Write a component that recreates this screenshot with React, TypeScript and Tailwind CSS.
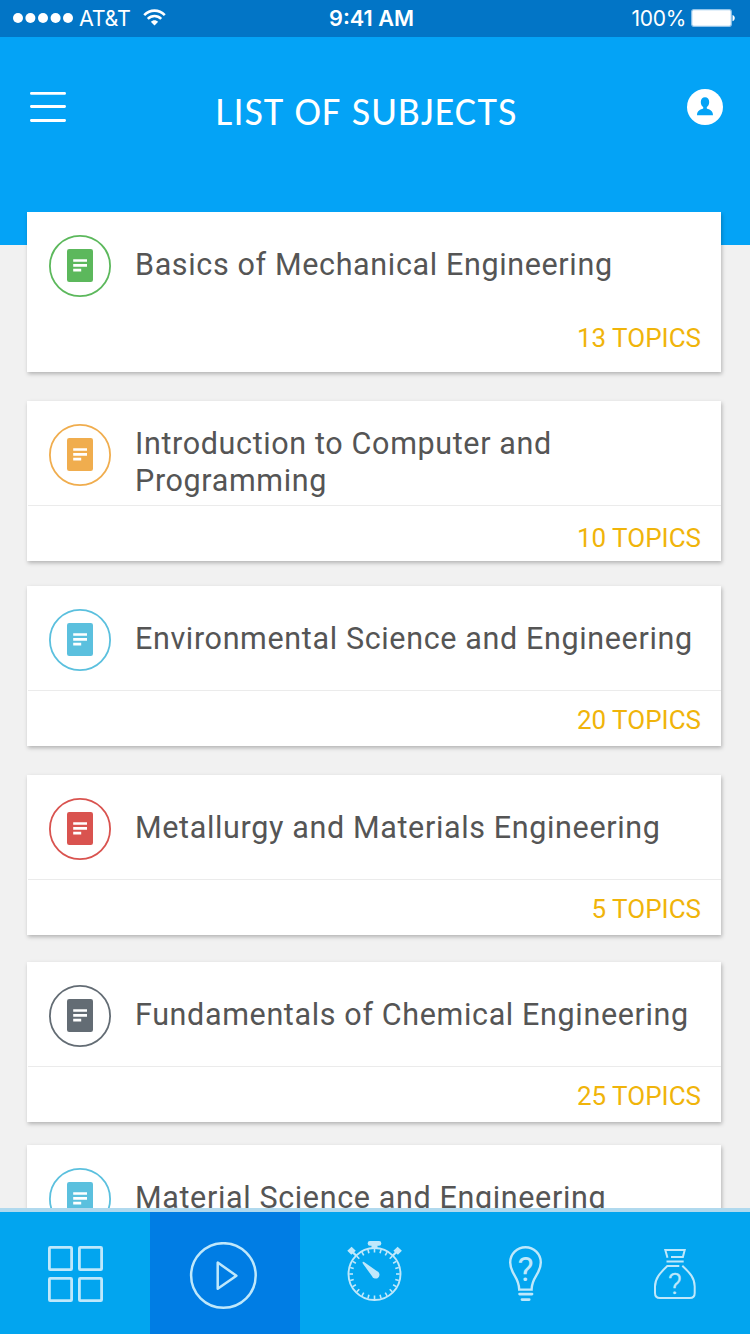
import React from "react";

type Subject = {
  title: string[];
  topics?: string;
  color: string;
  gap: string;
  divider: boolean;
  footer: string;
};

const subjects: Subject[] = [
  { title: ["Basics of Mechanical Engineering"], topics: "13 TOPICS", color: "text-[#5cb85c]", gap: "mt-0", divider: false, footer: "pt-[5px]" },
  { title: ["Introduction to Computer and", "Programming"], topics: "10 TOPICS", color: "text-[#f0ad4e]", gap: "mt-[29px]", divider: true, footer: "pt-[16px]" },
  { title: ["Environmental Science and Engineering"], topics: "20 TOPICS", color: "text-[#5bc0de]", gap: "mt-[25px]", divider: true, footer: "pt-[13px]" },
  { title: ["Metallurgy and Materials Engineering"], topics: "5 TOPICS", color: "text-[#d9534f]", gap: "mt-[29px]", divider: true, footer: "pt-[13px]" },
  { title: ["Fundamentals of Chemical Engineering"], topics: "25 TOPICS", color: "text-[#636c74]", gap: "mt-[27px]", divider: true, footer: "pt-[13px]" },
  { title: ["Material Science and Engineering"], color: "text-[#5bc0de]", gap: "mt-[23px]", divider: true, footer: "pt-[13px]" },
];

function DocumentBadge({ color }: { color: string }) {
  return (
    <svg width="62" height="62" viewBox="0 0 62 62" className={`shrink-0 ${color}`} fill="none">
      <circle cx="31" cy="31" r="30.1" stroke="currentColor" strokeWidth="1.8" />
      <rect x="18" y="14" width="26" height="33" rx="2.2" fill="currentColor" />
      <path d="M24.200 25.500h13.800M24.200 30.400h13.800M24.200 35.200h8" stroke="#fff" strokeWidth="2.700" />
    </svg>
  );
}

function SubjectCard({ subject }: { subject: Subject }) {
  return (
    <article className={`flex h-[160px] w-[694px] shrink-0 flex-col bg-white shadow-[1px_2px_4px_rgba(0,0,0,0.26)] ${subject.gap}`}>
      <div className="flex h-[104px] gap-6 pl-[22px] pt-[23px]">
        <DocumentBadge color={subject.color} />
        <h2 className={`whitespace-nowrap text-[30.5px] leading-[37px] tracking-[0.64px] text-[#555] ${subject.title.length > 1 ? "pt-px" : "pt-[11px]"}`}>
          {subject.title.map((line) => (
            <span key={line} className="block">{line}</span>
          ))}
        </h2>
      </div>
      <div className={`ml-px flex-1 border-t pr-5 text-right text-[26px] leading-8 text-[#f0b40a] ${subject.divider ? "border-[#ebebeb]" : "border-transparent"} ${subject.footer}`}>
        {subject.topics}
      </div>
    </article>
  );
}

function StatusBar() {
  return (
    <div className="flex h-[37px] items-center bg-[#0275c6] font-['Inter',sans-serif] text-[22px] text-white">
      <div className="flex flex-1 items-center pl-[13px]">
        <svg className="-mt-px" width="60" height="10" viewBox="0 0 60 10" fill="#fff">
          <circle cx="5" cy="5" r="5" />
          <circle cx="17.4" cy="5" r="5" />
          <circle cx="30" cy="5" r="5" />
          <circle cx="42.6" cy="5" r="5" />
          <circle cx="55" cy="5" r="5" />
        </svg>
        <span className="ml-[6px] w-[52px] whitespace-nowrap text-[21.5px] tracking-[-0.3px]">AT&amp;T</span>
        <svg className="-mt-[2px] ml-3" width="23" height="17" viewBox="0 0 23 17" fill="none">
          <path d="M1.2 6.1C7.2.1 15.8.1 21.8 6.1" stroke="#fff" strokeWidth="2.6" />
          <path d="M4.8 9.8c3.8-3.9 9.6-3.9 13.4 0" stroke="#fff" strokeWidth="2.5" />
          <path d="M7.8 12.7c2.2-2.1 5.2-2.1 7.4 0L11.5 16.6z" fill="#fff" />
        </svg>
      </div>
      <span className="w-[90px] whitespace-nowrap pr-[5px] text-center text-[21.700px] font-semibold">9:41 AM</span>
      <div className="flex flex-1 items-center justify-end pr-[15px]">
        <span className="whitespace-nowrap pt-px text-[21px] tracking-[-0.3px]">100%</span>
        <svg className="-mt-px ml-[5px]" width="44" height="18" viewBox="0 0 44 18">
          <rect x="0.7" y="0.7" width="39.6" height="16.6" rx="2" fill="#fff" stroke="#8fc3ea" strokeWidth="1.2" />
          <path d="M41.5 6c3 .8 3 5.400 0 6.200z" fill="#fff" />
        </svg>
      </div>
    </div>
  );
}

function GridIcon() {
  return (
    <svg width="55" height="56" viewBox="0 0 55 56" fill="none" stroke="#bfe8fb" strokeWidth="2.8">
      <rect x="1.400" y="1.400" width="22.200" height="22.200" rx="0.8" />
      <rect x="31.400" y="1.400" width="22.200" height="22.200" rx="0.8" />
      <rect x="1.400" y="32.400" width="22.200" height="22.200" rx="0.8" />
      <rect x="31.400" y="32.400" width="22.200" height="22.200" rx="0.8" />
    </svg>
  );
}

function PlayIcon() {
  return (
    <svg width="68" height="68" viewBox="0 0 68 68" fill="none" stroke="#bfe8fb" strokeWidth="2.500">
      <circle cx="34.400" cy="33.500" r="32.300" />
      <path d="M28.700 20.600v26.200l18.700-13.100z" strokeLinejoin="round" />
    </svg>
  );
}

const ticks = Array.from({ length: 24 }, (_, i) => i * 15);

function StopwatchIcon() {
  return (
    <svg width="60" height="62" viewBox="0 0 60 62" fill="none" stroke="#bfe8fb">
      <circle cx="29.500" cy="34" r="26" strokeWidth="1.9" />
      {ticks.map((angle) => (
        <path key={angle} d="M29.500 8.800v3.700" strokeWidth="1.600" transform={`rotate(${angle} 29.5 34)`} />
      ))}
      <rect x="22.700" y="1" width="13.600" height="4.700" rx="2.200" fill="#bfe8fb" stroke="none" />
      <path d="M29.500 5v4" strokeWidth="6" />
      <path d="M7 11.400l4.500 4.600M51.900 11.400l-4.500 4.600" strokeWidth="2.200" />
      <path d="M6.600 6.700l4.200 4-4.500 4-4-4zM52.600 6.700l-4.200 4 4.500 4 4-4z" fill="#bfe8fb" stroke="none" />
      <path d="M17.500 22Q18 21.500 19 22L31.800 31a3.900 3.900 0 1 1-4.900 5L17.800 23.500z" fill="#bfe8fb" stroke="none" />
    </svg>
  );
}

function BulbIcon() {
  return (
    <svg className="overflow-visible" width="41" height="64" viewBox="0 0 41 64" fill="none" stroke="#bfe8fb" strokeWidth="2.400">
      <path d="M14.200 49.600C14.200 37 5.200 34 5.200 22.500a15.300 15.300 0 0 1 30.600 0C35.800 34 26.600 37 26.600 49.600z" />
      <path d="M14.600 54.100h12.400M17 59.600h7.200" strokeWidth="2.800" strokeLinecap="round" />
      <text x="20.500" y="40.600" textAnchor="middle" fontSize="34" fill="#bfe8fb" stroke="none">?</text>
    </svg>
  );
}

function BagIcon() {
  return (
    <svg className="overflow-visible" width="50" height="58" viewBox="0 0 50 58" fill="none" stroke="#bfe8fb" strokeWidth="2">
      <path d="M17.500 12.800L15.300 5h19.400l-1.800 7H21M16.500 16.400h17.200M29.300 21H17.300C10 28 5 33.500 5 41.500V48q0 5 5 5h29.800q4.900 0 4.900-5v-6.500C44.700 33 40 28 32.300 20.700" />
      <text x="24.800" y="49.200" textAnchor="middle" fontSize="30" fontWeight="300" fill="#bfe8fb" stroke="#bfe8fb" strokeWidth="0.5">?</text>
    </svg>
  );
}

export default function App() {
  return (
    <div className="flex h-[1334px] w-[750px] flex-col overflow-hidden bg-[#f1f1f1] font-['Roboto',sans-serif]">
      <StatusBar />
      <header className="flex h-[208px] shrink-0 items-start justify-between bg-[#04a3f6] pl-[30px] pr-[27px] pt-[52px] text-white">
        <svg className="mt-[3px]" width="36" height="30" viewBox="0 0 36 30" stroke="#fff" strokeWidth="2.800" strokeLinecap="round">
          <path d="M1.400 1.400h33.200M1.400 14.500h33.200M1.400 28.500h33.200" />
        </svg>
        <h1 className="-mt-px w-[322px] whitespace-nowrap font-['Carlito','Lato',sans-serif] text-[40px] leading-[48px] tracking-[1.1px]">LIST OF SUBJECTS</h1>
        <svg width="36" height="36" viewBox="0 0 36 36">
          <circle cx="18" cy="18" r="18" fill="#fff" />
          <path d="M18 8.200c-2.500 0-4.200 1.900-4.200 4.700 0 2.600 1.100 4.300 2.400 5.200v1.500c-2.700 1.100-6.100 1.700-6.200 6.700h16c-.1-5-3.500-5.600-6.200-6.700v-1.500c1.300-.9 2.400-2.600 2.400-5.200 0-2.800-1.700-4.700-4.200-4.700z" fill="#04a3f6" />
        </svg>
      </header>
      <main className="relative -mt-[33px] flex min-h-0 flex-1 flex-col overflow-hidden pl-[27px]">
        {subjects.map((subject) => (
          <SubjectCard key={subject.title[0]} subject={subject} />
        ))}
      </main>
      <nav className="grid h-[126px] shrink-0 grid-cols-5 border-t-4 border-[#b0d9ee] bg-[#02a5ef]">
        <button className="flex items-start pl-12 pt-[34px]" aria-label="Dashboard"><GridIcon /></button>
        <button className="flex items-start bg-[#007de4] pl-[39px] pt-[30px]" aria-label="Play"><PlayIcon /></button>
        <button className="flex items-start pl-[45px] pt-[28px]" aria-label="Timer"><StopwatchIcon /></button>
        <button className="flex items-start pl-[55px] pt-[28px]" aria-label="Hints"><BulbIcon /></button>
        <button className="flex items-start pl-[50px] pt-[33px]" aria-label="Rewards"><BagIcon /></button>
      </nav>
    </div>
  );
}
